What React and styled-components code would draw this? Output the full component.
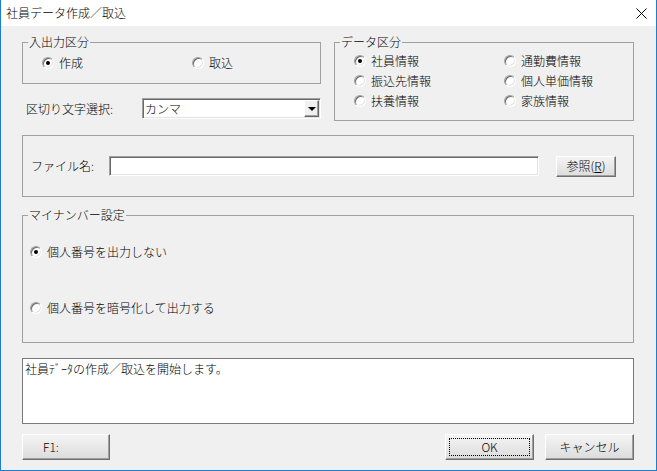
import React from "react";
import styled, { createGlobalStyle, css } from "styled-components";

const GlobalStyle = createGlobalStyle`
  html, body {
    margin: 0;
    padding: 0;
    background: #ffffff;
  }
  body {
    font-family: "Noto Sans CJK JP", "Noto Sans", sans-serif;
    font-size: 12px;
    font-weight: 300;
    color: #000000;
  }
`;

const Window = styled.div`
  width: 657px;
  height: 471px;
  box-sizing: border-box;
  border: 1px solid #1a7fd4;
  border-top: none;
  display: flex;
  flex-direction: column;
  background: #f0f0f0;
`;

const TitleBar = styled.div`
  height: 26px;
  flex: none;
  background: #ffffff;
  display: flex;
  align-items: center;
  justify-content: space-between;
  padding: 0 9px 0 5px;
  line-height: 14px;
`;

const Client = styled.div`
  flex: 1;
  display: flex;
  flex-direction: column;
  padding: 16px 22px 0 21px;
`;

const TopGrid = styled.div`
  display: grid;
  grid-template-columns: 299px 300px;
  column-gap: 13px;
  align-items: start;
`;

const Column = styled.div`
  display: flex;
  flex-direction: column;
`;

const Group = styled.div`
  position: relative;
  box-sizing: border-box;
  border: 1px solid #a0a0a0;
`;

const Legend = styled.span`
  position: absolute;
  top: -8px;
  left: 5px;
  padding: 0 1px;
  line-height: 14px;
  background: #f0f0f0;
  white-space: nowrap;
`;

const RadioGrid = styled(Group)`
  display: grid;
  grid-template-columns: 150px 1fr;
  grid-auto-rows: 20px;
  padding: ${(p) => p.$pad};
`;

const RadioLabel = styled.label`
  display: flex;
  align-items: center;
  gap: 5px;
  height: 20px;
  line-height: 14px;
  white-space: nowrap;
`;

const Circle = styled.span`
  position: relative;
  flex: none;
  width: 12px;
  height: 12px;
  box-sizing: border-box;
  border-radius: 50%;
  border: 1px solid;
  border-color: #a0a0a0 #ffffff #ffffff #a0a0a0;
  background: #ffffff;
  box-shadow: inset 1px 1px 0 #696969, inset -1px -1px 0 #e3e3e3;

  ${(p) =>
    p.$checked &&
    css`
      &::after {
        content: "";
        position: absolute;
        left: 3px;
        top: 3px;
        width: 4px;
        height: 4px;
        border-radius: 50%;
        background: #000000;
      }
    `}
`;

const ComboRow = styled.div`
  margin-top: 14px;
  height: 21px;
  display: flex;
  align-items: center;
  padding-left: 4px;
`;

const ComboLabel = styled.span`
  line-height: 14px;
  white-space: nowrap;
`;

const Combo = styled.div`
  margin-left: auto;
  width: 179px;
  height: 21px;
  box-sizing: border-box;
  display: flex;
  align-items: stretch;
  background: #ffffff;
  border: 1px solid;
  border-color: #a0a0a0 #ffffff #ffffff #a0a0a0;
  box-shadow: inset 1px 1px 0 #696969, inset -1px -1px 0 #e3e3e3;
  padding: 1px;
`;

const ComboText = styled.span`
  flex: 1;
  padding-left: 1px;
  line-height: 17px;
`;

const ComboArrow = styled.span`
  width: 15px;
  flex: none;
  box-sizing: border-box;
  display: flex;
  align-items: center;
  justify-content: center;
  background: #f0f0f0;
  border: 1px solid;
  border-color: #ffffff #696969 #696969 #ffffff;
  box-shadow: inset -1px -1px 0 #a0a0a0;

  &::before {
    content: "";
    border-left: 4px solid transparent;
    border-right: 4px solid transparent;
    border-top: 4px solid #000000;
    margin-top: 1px;
  }
`;

const FileGroup = styled(Group)`
  margin-top: 14px;
  height: 62px;
  display: flex;
  align-items: center;
  padding-left: 8px;
`;

const FieldLabel = styled.span`
  width: 78px;
  line-height: 14px;
  white-space: nowrap;
`;

const TextInput = styled.div`
  width: 430px;
  height: 20px;
  box-sizing: border-box;
  background: #ffffff;
  border: 1px solid;
  border-color: #a0a0a0 #ffffff #ffffff #a0a0a0;
  box-shadow: inset 1px 1px 0 #696969, inset -1px -1px 0 #e3e3e3;
`;

const MyNumberGroup = styled(Group)`
  margin-top: 18px;
  height: 128px;
  display: flex;
  flex-direction: column;
  gap: 36px;
  padding: 26px 0 0 7px;
`;

const MessageBox = styled.div`
  margin-top: 15px;
  height: 66px;
  box-sizing: border-box;
  background: #ffffff;
  border: 1px solid #7a7a7a;
  padding: 2px 2px;
  line-height: 16px;
`;

const ButtonRow = styled.div`
  margin-top: 10px;
  display: flex;
  align-items: center;
  gap: 11px;
`;

const Spacer = styled.div`
  flex: 1;
`;

const Button = styled.button`
  position: relative;
  width: ${(p) => p.$w}px;
  height: ${(p) => p.$h}px;
  margin-left: ${(p) => p.$ml || 0}px;
  box-sizing: border-box;
  padding: ${(p) => (p.$left ? "0 0 0 20px" : "0")};
  text-align: ${(p) => (p.$left ? "left" : "center")};
  font-family: inherit;
  font-size: 12px;
  font-weight: 300;
  line-height: 14px;
  color: #000000;
  background: linear-gradient(#f4f4f4, #dcdcdc);
  border: 1px solid;
  border-color: #ffffff #6e6e6e #6e6e6e #ffffff;
  box-shadow: inset -1px -1px 0 #a0a0a0;
  outline: none;

  ${(p) =>
    p.$focused &&
    css`
      &::after {
        content: "";
        position: absolute;
        inset: 3px;
        border: 1px dotted #000000;
      }
    `}
`;

const CloseIcon = () => (
  <svg width="11" height="11" viewBox="0 0 11 11">
    <path d="M0.5 0.5 L10.5 10.5 M10.5 0.5 L0.5 10.5" stroke="#000" strokeWidth="1" />
  </svg>
);

const Radio = ({ checked, children }) => (
  <RadioLabel>
    <Circle $checked={checked} />
    {children}
  </RadioLabel>
);

const dataKinds = [
  { label: "社員情報", checked: true },
  { label: "通勤費情報" },
  { label: "振込先情報" },
  { label: "個人単価情報" },
  { label: "扶養情報" },
  { label: "家族情報" },
];

export default function App() {
  return (
    <>
      <GlobalStyle />
      <Window>
        <TitleBar>
          <span>社員データ作成／取込</span>
          <CloseIcon />
        </TitleBar>
        <Client>
          <TopGrid>
            <Column>
              <RadioGrid $pad="10px 0 10px 19px">
                <Legend>入出力区分</Legend>
                <Radio checked>作成</Radio>
                <Radio>取込</Radio>
              </RadioGrid>
              <ComboRow>
                <ComboLabel>区切り文字選択:</ComboLabel>
                <Combo>
                  <ComboText>カンマ</ComboText>
                  <ComboArrow />
                </Combo>
              </ComboRow>
            </Column>
            <RadioGrid $pad="8px 0 9px 19px">
              <Legend>データ区分</Legend>
              {dataKinds.map((item) => (
                <Radio key={item.label} checked={item.checked}>
                  {item.label}
                </Radio>
              ))}
            </RadioGrid>
          </TopGrid>

          <FileGroup>
            <FieldLabel>ファイル名:</FieldLabel>
            <TextInput />
            <Button $w={60} $h={21} $ml={17}>参照(<u>R</u>)</Button>
          </FileGroup>

          <MyNumberGroup>
            <Legend>マイナンバー設定</Legend>
            <Radio checked>個人番号を出力しない</Radio>
            <Radio>個人番号を暗号化して出力する</Radio>
          </MyNumberGroup>

          <MessageBox>社員ﾃﾞｰﾀの作成／取込を開始します。</MessageBox>

          <ButtonRow>
            <Button $w={88} $h={26} $left>F1:</Button>
            <Spacer />
            <Button $w={89} $h={26} $focused>OK</Button>
            <Button $w={89} $h={26}>キャンセル</Button>
          </ButtonRow>
        </Client>
      </Window>
    </>
  );
}
